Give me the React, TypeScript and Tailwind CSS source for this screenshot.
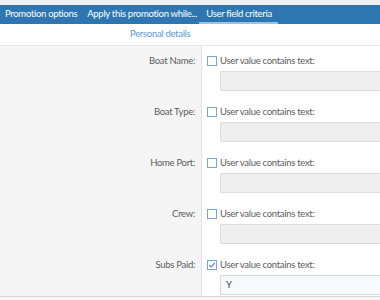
const fields = [
  { label: "Boat Name:", checked: false, value: "" },
  { label: "Boat Type:", checked: false, value: "" },
  { label: "Home Port:", checked: false, value: "" },
  { label: "Crew:", checked: false, value: "" },
  { label: "Subs Paid:", checked: true, value: "Y" },
];

function Checkbox({ checked }: { checked: boolean }) {
  return (
    <span className="flex h-[10px] w-[10px] shrink-0 items-center justify-center border border-[#7aa7cf] bg-white">
      {checked && (
        <svg width="8" height="8" viewBox="0 0 8 8" fill="none">
          <path d="M1.2 4.2 L3.2 6 L6.8 1.8" stroke="#4a86bb" strokeWidth="1.1" />
        </svg>
      )}
    </span>
  );
}

export default function App() {
  return (
    <div className="h-[300px] w-[380px] overflow-hidden bg-[#f0f0f0] font-['Lato',sans-serif] text-[9.5px] tracking-[-0.3px]">
      <div className="h-[5px]" />
      <div className="flex h-[19px] items-stretch bg-[#2e76b1] text-white">
        <div className="flex items-center pl-[5px] pr-[5px]">Promotion options</div>
        <div className="flex items-center pl-[5px] pr-[2px]">Apply this promotion while...</div>
        <div className="flex items-center border-b-2 border-[#9cc3e6] pl-[7px] pr-[6px] pt-[2px]">User field criteria</div>
      </div>
      <div className="flex h-[22px] items-center border-b border-[#e6e6e6] bg-white pl-[130px] text-[#5a9bd3]">
        Personal details
      </div>
      <div className="flex h-[251px] border-b border-[#d6d6d6]">
        <div className="w-[202px] border-r border-[#e2e2e2] bg-[#f5f5f5] pt-[8px]">
          {fields.map((f) => (
            <div key={f.label} className="flex h-[51px] justify-end pr-[6px] text-[#5c5c5c]">
              <span className="leading-[14px]">{f.label}</span>
            </div>
          ))}
        </div>
        <div className="flex-1 bg-white pt-[8px]">
          {fields.map((f) => (
            <div key={f.label} className="h-[51px] pl-[5px]">
              <div className="flex h-[14px] items-center gap-[3px] text-[#5c5c5c]">
                <Checkbox checked={f.checked} />
                <span>User value contains text:</span>
              </div>
              <div
                className={`ml-[13px] mt-[3px] flex h-[20px] items-center rounded-l-[2px] border border-r-0 px-[5px] text-[#444] ${
                  f.checked ? "border-[#d4d8dd] bg-[#f6f9fd]" : "border-[#dcdcdc] bg-[#efefef]"
                }`}
              >
                {f.value}
              </div>
            </div>
          ))}
        </div>
      </div>
      <div className="h-[4px] bg-[#f7f7f7]" />
    </div>
  );
}
